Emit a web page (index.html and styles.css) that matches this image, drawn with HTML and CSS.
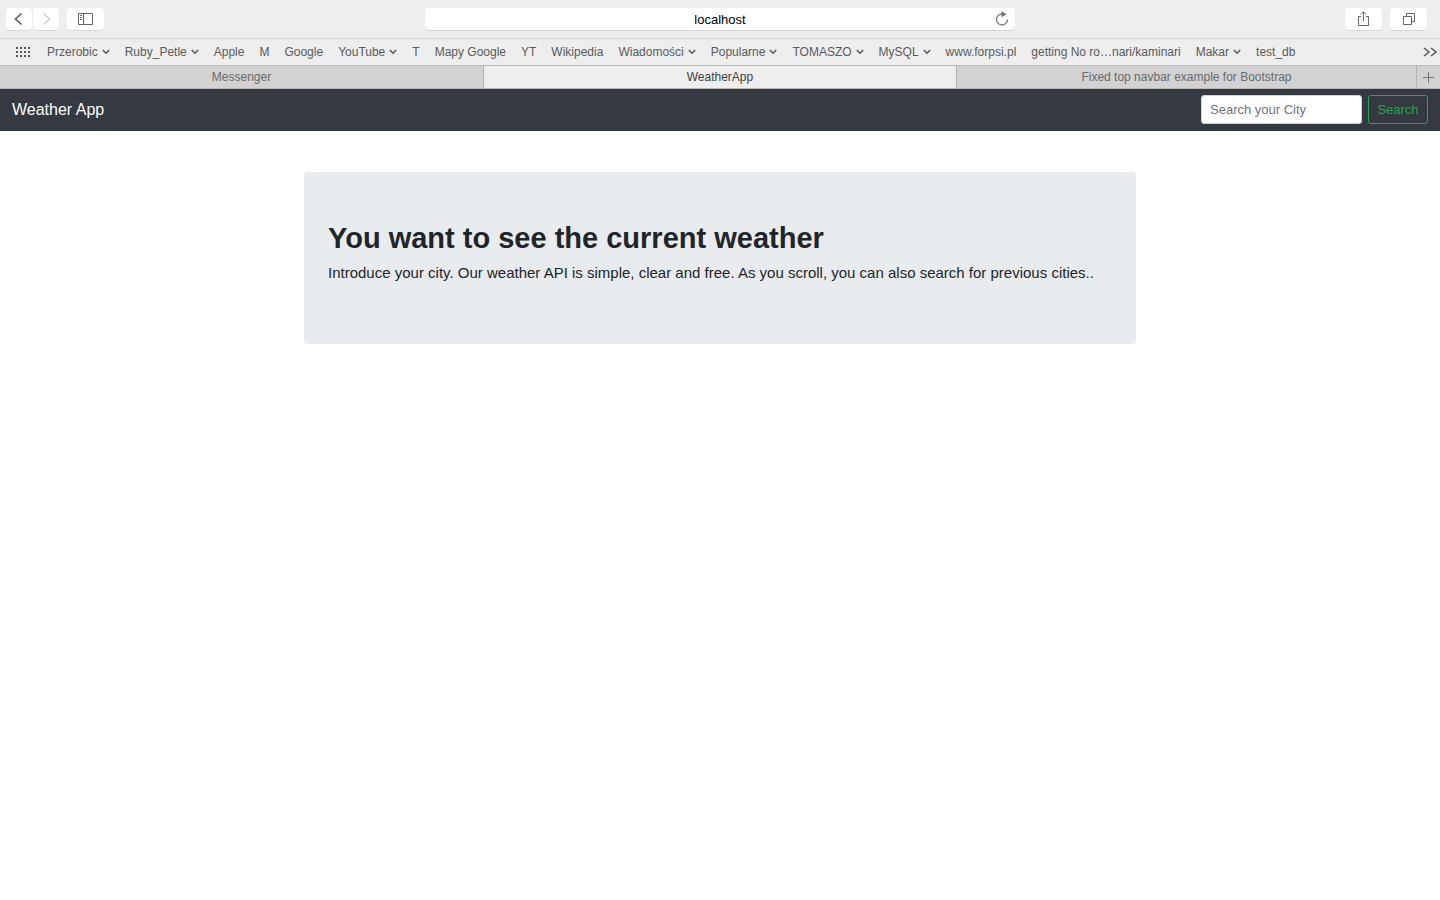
FILE: index.html
```html
<!DOCTYPE html>
<html lang="en">
<head>
<meta charset="utf-8">
<meta name="viewport" content="width=device-width, initial-scale=1">
<title>WeatherApp</title>
<link rel="stylesheet" href="styles.css">
</head>
<body>
<div class="browser">
  <div class="toolbar">
    <div class="tools tools-left">
      <div class="history">
        <button class="tool tool-small" type="button" aria-label="Back"><svg width="26" height="22" viewBox="0 0 26 22"><path d="M15.500 5.500L9.500 11L15.500 16.500" stroke="#5a5a5a" stroke-width="1.600"/></svg></button>
        <button class="tool tool-small" type="button" aria-label="Forward" disabled><svg width="26" height="22" viewBox="0 0 26 22"><path d="M10.500 5.500L16.500 11L10.500 16.500" stroke="#d2d2d2" stroke-width="1.600"/></svg></button>
      </div>
      <button class="tool" type="button" aria-label="Show sidebar"><svg width="37" height="22" viewBox="0 0 37 22"><path d="M11.500 5.500H25.500V16.500H11.500ZM16.500 5.500V16.500M13 7.500H15M13 9.500H15M13 11.500H15" stroke="#666"/></svg></button>
    </div>
    <div class="address">
      <input class="address-input" type="text" value="localhost" aria-label="Address">
      <button class="reload" type="button" aria-label="Reload"><svg width="14" height="16" viewBox="0 0 14 16"><path d="M12.500 8.500A5.500 5.500 0 1 1 7 3" stroke="#777" stroke-width="1.300"/><path d="M6.500 0L11.500 3.200L6.500 6.200Z" fill="#777"/></svg></button>
    </div>
    <div class="tools tools-right">
      <button class="tool" type="button" aria-label="Share"><svg width="37" height="22" viewBox="0 0 37 22"><path d="M16 8.500H13.500V17.500H23.500V8.500H21M18.500 13V4M15.800 6.500L18.500 3.800L21.200 6.500" stroke="#666"/></svg></button>
      <button class="tool" type="button" aria-label="Show all tabs"><svg width="37" height="22" viewBox="0 0 37 22"><path d="M13.500 8.500H21.500V16.500H13.500ZM16.500 8V5.500H24.500V13.500H22" stroke="#666"/></svg></button>
    </div>
  </div>

  <nav class="bookmarks" aria-label="Favourites">
    <button class="plain" type="button" aria-label="Top sites"><svg width="14" height="10" viewBox="0 0 14 10"><path d="M0 1H14M0 5H14M0 9H14" stroke="#5a5a5a" stroke-width="2" stroke-dasharray="2 2"/></svg></button>
    <div class="bookmark-list">
      <button class="plain menu" type="button">Przerobic<svg width="8" height="6" viewBox="0 0 8 6"><path d="M.8 1L4 4.200L7.200 1" stroke="#5a5a5a" stroke-width="1.600"/></svg></button>
      <button class="plain menu" type="button">Ruby_Petle<svg width="8" height="6" viewBox="0 0 8 6"><path d="M.8 1L4 4.200L7.200 1" stroke="#5a5a5a" stroke-width="1.600"/></svg></button>
      <a href="#">Apple</a>
      <a href="#">M</a>
      <a href="#">Google</a>
      <button class="plain menu" type="button">YouTube<svg width="8" height="6" viewBox="0 0 8 6"><path d="M.8 1L4 4.200L7.200 1" stroke="#5a5a5a" stroke-width="1.600"/></svg></button>
      <a href="#">T</a>
      <a href="#">Mapy Google</a>
      <a href="#">YT</a>
      <a href="#">Wikipedia</a>
      <button class="plain menu" type="button">Wiadomości<svg width="8" height="6" viewBox="0 0 8 6"><path d="M.8 1L4 4.200L7.200 1" stroke="#5a5a5a" stroke-width="1.600"/></svg></button>
      <button class="plain menu" type="button">Popularne<svg width="8" height="6" viewBox="0 0 8 6"><path d="M.8 1L4 4.200L7.200 1" stroke="#5a5a5a" stroke-width="1.600"/></svg></button>
      <button class="plain menu" type="button">TOMASZO<svg width="8" height="6" viewBox="0 0 8 6"><path d="M.8 1L4 4.200L7.200 1" stroke="#5a5a5a" stroke-width="1.600"/></svg></button>
      <button class="plain menu" type="button">MySQL<svg width="8" height="6" viewBox="0 0 8 6"><path d="M.8 1L4 4.200L7.200 1" stroke="#5a5a5a" stroke-width="1.600"/></svg></button>
      <a href="#">www.forpsi.pl</a>
      <a href="#">getting No ro…nari/kaminari</a>
      <button class="plain menu" type="button">Makar<svg width="8" height="6" viewBox="0 0 8 6"><path d="M.8 1L4 4.200L7.200 1" stroke="#5a5a5a" stroke-width="1.600"/></svg></button>
      <a href="#">test_db</a>
    </div>
    <button class="plain" type="button" aria-label="More favourites"><svg width="14" height="10" viewBox="0 0 14 10"><path d="M1 1L6 5L1 9M8 1L13 5L8 9" stroke="#5a5a5a" stroke-width="1.500"/></svg></button>
  </nav>

  <div class="tabs">
    <button class="tab tab-first" type="button">Messenger</button>
    <button class="tab tab-active" type="button">WeatherApp</button>
    <button class="tab tab-last" type="button">Fixed top navbar example for Bootstrap</button>
    <button class="tab-new" type="button" aria-label="New tab"><svg width="11" height="11" viewBox="0 0 11 11"><path d="M5.500 0V11M0 5.500H11" stroke="#777"/></svg></button>
  </div>
</div>

<header class="navbar">
  <a class="brand" href="#">Weather App</a>
  <form class="search">
    <input class="search-input" type="text" placeholder="Search your City" aria-label="Search your City">
    <button class="search-button" type="button">Search</button>
  </form>
</header>

<main class="container">
  <section class="jumbotron">
    <h1>You want to see the current weather</h1>
    <p>Introduce your city. Our weather API is simple, clear and free. As you scroll, you can also search for previous cities..</p>
  </section>
</main>
</body>
</html>
```
FILE: styles.css
```css
* {
  box-sizing: border-box;
}

body {
  margin: 0;
  background: #fff;
  color: #212529;
  font-family: "Liberation Sans", Arial, sans-serif;
}

button,
input {
  margin: 0;
  font-family: inherit;
}

svg {
  display: block;
  fill: none;
}

a {
  color: inherit;
  text-decoration: none;
}

.toolbar {
  display: grid;
  grid-template-columns: 1fr 41% 1fr;
  align-items: center;
  height: 39px;
  background: #eee;
  border-bottom: 1px solid #d6d6d6;
}

.tools {
  display: flex;
  gap: 8px;
}

.tools-left {
  padding-left: 6px;
}

.tools-right {
  justify-content: flex-end;
  padding-right: 13px;
}

.history {
  display: flex;
  gap: 1px;
}

.tool {
  width: 37px;
  height: 22px;
  padding: 0;
  background: #fff;
  border: 0;
  border-radius: 4px;
  box-shadow: 0 1px 0 #d8d8d8;
}

.tool-small {
  width: 26px;
}

.address {
  display: flex;
  align-items: center;
  height: 22px;
  padding-right: 6px;
  background: #fff;
  border-radius: 4px;
  box-shadow: 0 1px 0 #d4d4d4;
}

.address-input {
  flex: 1;
  min-width: 0;
  height: 22px;
  padding: 0 0 0 20px;
  background: none;
  border: 0;
  color: #000;
  font-size: 13px;
  text-align: center;
}

.reload,
.plain {
  padding: 0;
  background: none;
  border: 0;
}

.bookmarks {
  display: flex;
  align-items: center;
  height: 27px;
  padding: 0 3px 0 16px;
  background: #eee;
  border-bottom: 1px solid #bcbcbc;
  color: #5a5a5a;
  font-size: 12px;
}

.bookmark-list {
  display: flex;
  flex: 1;
  gap: 15px;
  min-width: 0;
  margin-left: 17px;
  overflow: hidden;
  white-space: nowrap;
}

.bookmarks .plain {
  color: inherit;
  font-size: 12px;
}

.menu {
  display: flex;
  align-items: center;
  gap: 4px;
}

.tabs {
  display: flex;
  height: 23px;
  border-bottom: 1px solid #b4b4b4;
  background: #d2d2d2;
}

.tab,
.tab-new {
  padding: 0;
  background: #d2d2d2;
  border: 0;
  border-right: 1px solid #b4b4b4;
  color: #6a6a6a;
  font-size: 12px;
}

.tab {
  flex: 473 1 0;
  min-width: 0;
}

.tab-first {
  flex-grow: 484;
}

.tab-active {
  background: #eee;
  color: #404040;
}

.tab-last {
  flex-grow: 460;
}

.tab-new {
  display: flex;
  align-items: center;
  justify-content: center;
  width: 23px;
  border-right: 0;
}

.navbar {
  display: flex;
  align-items: center;
  justify-content: space-between;
  padding: 6px 12px 7px;
  background: #343a40;
}

.brand {
  color: #fff;
  font-size: 16px;
}

.search {
  display: flex;
  gap: 6px;
}

.search-input {
  width: 161px;
  height: 29px;
  padding: 0 8px;
  background: #fff;
  border: 1px solid #ced4da;
  border-radius: 3px;
  color: #495057;
  font-size: 13px;
}

.search-input::placeholder {
  color: #6c757d;
  opacity: 1;
}

.search-button {
  width: 60px;
  height: 29px;
  padding: 0;
  background: none;
  border: 1px solid #26a552;
  border-radius: 3px;
  color: #26a552;
  font-size: 13px;
}

.container {
  max-width: 856px;
  margin: 41px auto 0;
  padding: 0 12px;
}

.jumbotron {
  padding: 48px 24px 60px;
  background: #e9ecef;
  border-radius: 4px;
}

.jumbotron h1 {
  margin: 0 0 6px;
  font-size: 29px;
  line-height: 36px;
}

.jumbotron p {
  margin: 0;
  font-size: 15px;
  line-height: 22px;
}
```
